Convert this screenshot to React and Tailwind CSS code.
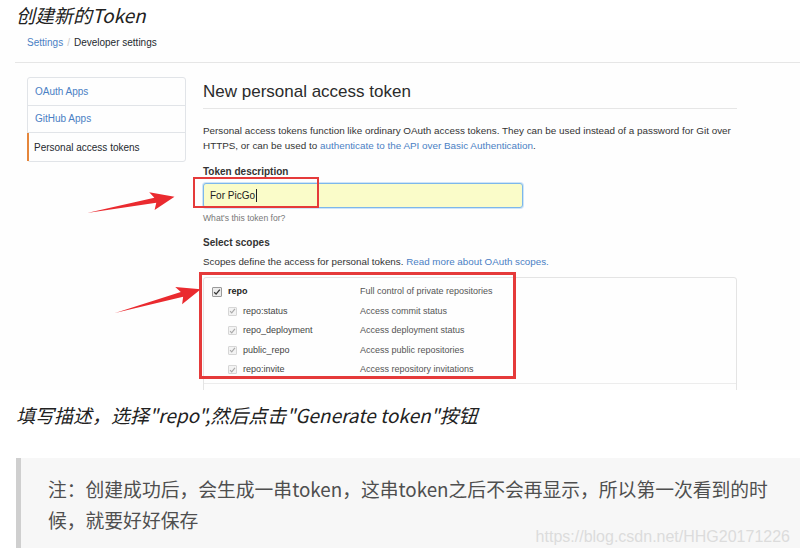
import React from "react";

const UI = { fontFamily: '"Liberation Sans", Arial, sans-serif' };
const CJK = { fontFamily: '"Noto Sans CJK SC", "Noto Sans", sans-serif' };

function Check({ dim }) {
  return (
    <span
      className={
        dim
          ? "inline-flex items-center justify-center w-[9px] h-[9px] rounded-[1px] border border-[#d6d6d6] bg-[#f3f3f3]"
          : "inline-flex items-center justify-center w-[10px] h-[10px] rounded-[1px] border border-[#9a9a9a] bg-[#ececec]"
      }
    >
      <svg width="8" height="8" viewBox="0 0 8 8">
        <path
          d="M1.2 4.2 L3.1 6.1 L6.8 1.6"
          fill="none"
          stroke={dim ? "#a9a9a9" : "#333"}
          strokeWidth="1.3"
        />
      </svg>
    </span>
  );
}

function Arrow({ x, y, len, angle }) {
  const L = len;
  const pts = `0,0 ${L - 20},-2.6 ${L - 24},-9 ${L},0 ${L - 22},9.5 ${L - 19},2.6`;
  return (
    <svg
      className="absolute left-0 top-0 pointer-events-none"
      width="800"
      height="557"
    >
      <polygon
        points={pts}
        fill="#ea2a2f"
        transform={`translate(${x} ${y}) rotate(${angle})`}
      />
    </svg>
  );
}

const scopes = [
  ["repo:status", "Access commit status"],
  ["repo_deployment", "Access deployment status"],
  ["public_repo", "Access public repositories"],
  ["repo:invite", "Access repository invitations"],
];

export default function App() {
  return (
    <div className="relative w-[800px] h-[557px] overflow-hidden bg-white">
      <div
        className="pl-[16px] h-[30px] leading-[30px] text-[19px] italic text-[#222]"
        style={CJK}
      >
        创建新的Token
      </div>

      <div className="h-[360px] overflow-hidden bg-[#fefefe]" style={UI}>
        <div className="ml-[15px] h-[33px] border-b border-[#e6e6e6] pl-[12px] pt-[6px] text-[10px] leading-[14px]">
          <span className="text-[#4a80c4]">Settings</span>
          <span className="text-[#c8c8c8] mx-[4px]">/</span>
          <span className="text-[#24292e]">Developer settings</span>
        </div>

        <div className="flex pt-[14px]">
          <div className="ml-[27px] w-[159px] shrink-0 self-start border border-[#e1e4e8] rounded-[3px] text-[10px]">
            <div className="h-[27.5px] flex items-center pl-[7px] border-b border-[#e1e4e8] text-[#4a80c4]">
              OAuth Apps
            </div>
            <div className="h-[27.5px] flex items-center pl-[7px] border-b border-[#e1e4e8] text-[#4a80c4]">
              GitHub Apps
            </div>
            <div className="h-[28px] flex items-center pl-[5px] border-l-[2px] border-[#e5863b] -ml-px text-[#24292e]">
              Personal access tokens
            </div>
          </div>

          <div className="ml-[17px] w-[534px] text-[#24292e]">
            <div className="h-[32px] border-b border-[#e6e6e6] text-[17px] leading-[30px] text-[#2b2b2b] font-light">
              New personal access token
            </div>
            <p className="mt-[14px] text-[9.9px] leading-[15px] text-[#333] whitespace-nowrap">
              Personal access tokens function like ordinary OAuth access tokens.
              They can be used instead of a password for Git over
              <br />
              HTTPS, or can be used to{" "}
              <span className="text-[#4a80c4]">
                authenticate to the API over Basic Authentication
              </span>
              .
            </p>
            <div className="mt-[12px] text-[10px] leading-[14px] font-bold text-[#333]">
              Token description
            </div>
            <div className="mt-[4px] w-[320px] h-[25px] rounded-[3px] border border-[#7cb7ec] bg-[#fafcc9] shadow-[0_0_0_1px_rgba(120,180,235,0.35)] flex items-center pl-[6px] text-[10px] text-[#222]">
              For PicGo
              <span className="inline-block w-px h-[13px] bg-[#222] ml-px" />
            </div>
            <div className="mt-[4px] text-[8.6px] leading-[12px] text-[#777]">
              What's this token for?
            </div>
            <div className="mt-[12px] text-[10px] leading-[14px] font-bold text-[#333]">
              Select scopes
            </div>
            <div className="mt-[5px] text-[9.8px] leading-[14px] text-[#333]">
              Scopes define the access for personal tokens.{" "}
              <span className="text-[#4a80c4]">Read more about OAuth scopes.</span>
            </div>
            <div className="mt-[8px] h-[200px] border border-[#e4e4e4] rounded-[3px] pt-[4px] text-[9px]">
              <div className="h-[19.5px] flex items-center">
                <div className="w-[156px] flex items-center pl-[8px]">
                  <Check />
                  <span className="ml-[6px] text-[#222] font-semibold">repo</span>
                </div>
                <span className="text-[#555]">Full control of private repositories</span>
              </div>
              {scopes.map(([n, d]) => (
                <div key={n} className="h-[19.5px] flex items-center">
                  <div className="w-[156px] flex items-center pl-[24px]">
                    <Check dim />
                    <span className="ml-[6px] text-[#444]">{n}</span>
                  </div>
                  <span className="text-[#555]">{d}</span>
                </div>
              ))}
              <div className="mt-[3px] border-t border-[#ececec]" />
            </div>
          </div>
        </div>
      </div>

      <div
        className="pl-[16px] h-[50px] leading-[50px] text-[19px] italic text-[#222]"
        style={CJK}
      >
        填写描述，选择"repo",然后点击"Generate token"按钮
      </div>

      <div
        className="relative mt-[18px] ml-[16px] h-[90px] bg-[#f7f7f7] border-l-[5px] border-[#cfcfcf] pl-[27px] pt-[15px] text-[18.8px] leading-[31px] text-[#4f4f4f]"
        style={CJK}
      >
        注：创建成功后，会生成一串token，这串token之后不会再显示，所以第一次看到的时
        <br />
        候，就要好好保存
        <div
          className="absolute right-[10px] top-[70px] text-[16px] leading-[18px] text-[#dcdcdc]"
          style={UI}
        >
          https://blog.csdn.net/HHG20171226
        </div>
      </div>

      <div className="absolute left-[193px] top-[177px] w-[126px] h-[31px] border-[2px] border-[#e53a3a]" />
      <div className="absolute left-[199px] top-[272px] w-[317px] h-[107px] border-[3px] border-[#e53a3a]" />

      <Arrow x={87} y={213} len={89} angle={-10.6} />
      <Arrow x={115} y={313} len={89} angle={-15.5} />
    </div>
  );
}
